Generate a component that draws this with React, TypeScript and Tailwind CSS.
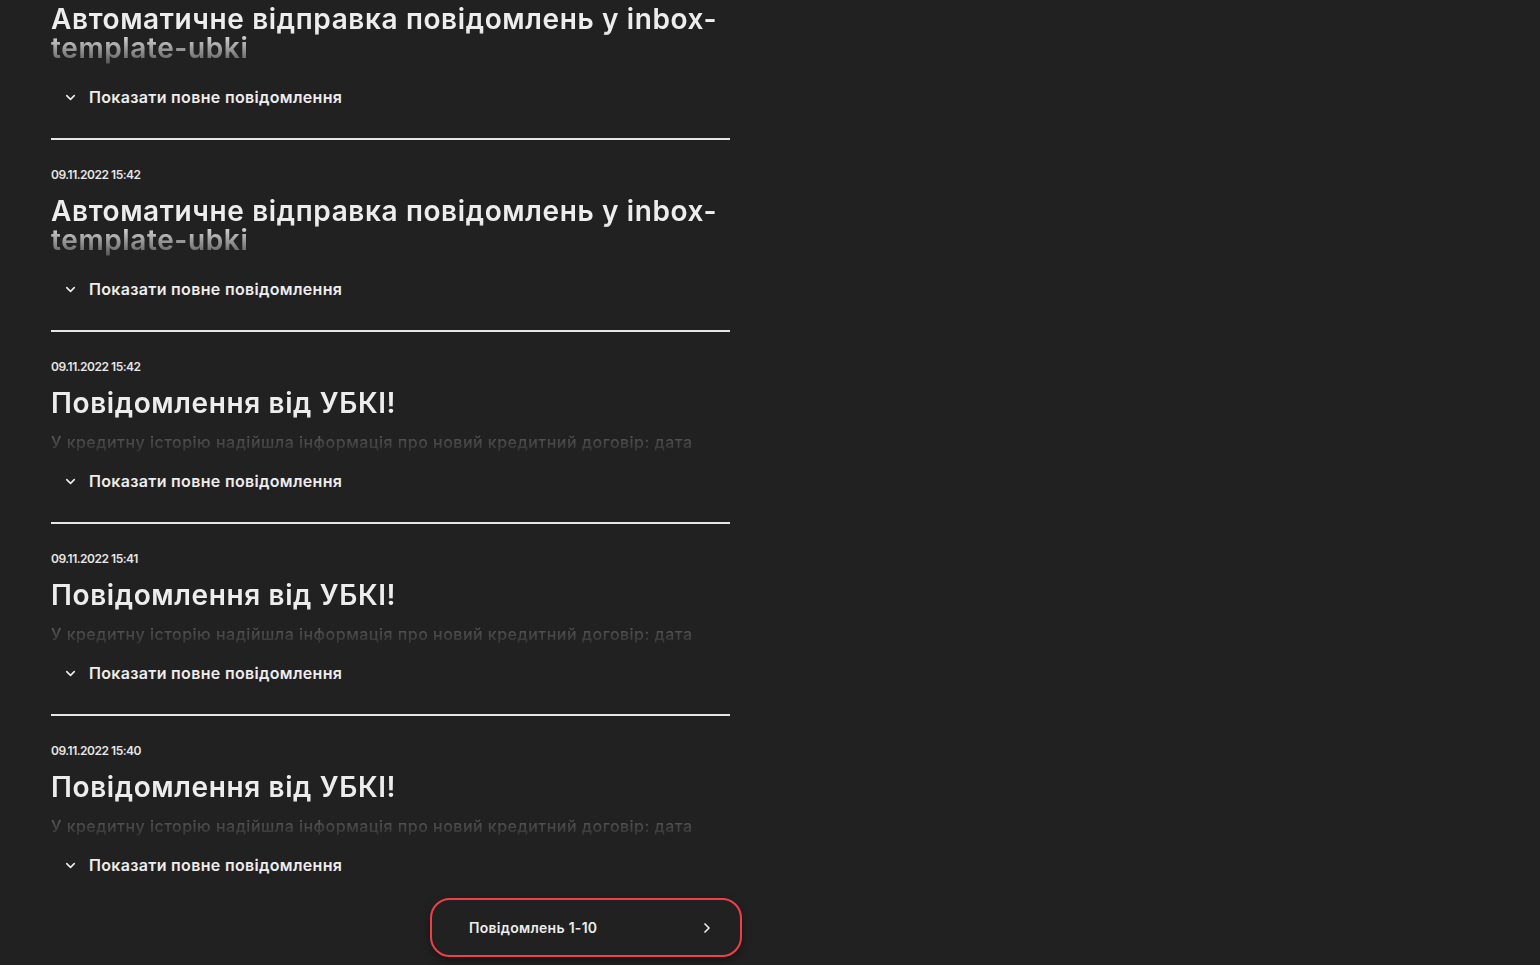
import { ChevronDown, ChevronRight } from "lucide-react";

type Message = {
  date: string;
  title: string;
  body?: string;
};

const messages: Message[] = [
  {
    date: "09.11.2022 15:43",
    title: "Автоматичне відправка повідомлень у inbox-template-ubki",
  },
  {
    date: "09.11.2022 15:42",
    title: "Автоматичне відправка повідомлень у inbox-template-ubki",
  },
  {
    date: "09.11.2022 15:42",
    title: "Повідомлення від УБКІ!",
    body: "У кредитну історію надійшла інформація про новий кредитний договір: дата укладення 09.11.2022, сума 5000 грн.",
  },
  {
    date: "09.11.2022 15:41",
    title: "Повідомлення від УБКІ!",
    body: "У кредитну історію надійшла інформація про новий кредитний договір: дата укладення 09.11.2022, сума 5000 грн.",
  },
  {
    date: "09.11.2022 15:40",
    title: "Повідомлення від УБКІ!",
    body: "У кредитну історію надійшла інформація про новий кредитний договір: дата укладення 09.11.2022, сума 5000 грн.",
  },
];

function MessageItem({ message, last }: { message: Message; last: boolean }) {
  return (
    <article className={last ? "" : "border-b-2 border-[#e6e6e6]"}>
      <div className="pt-[27px]">
        <p className="text-[12px] leading-[16px] font-semibold tracking-[-0.04em] text-[#e6e6e6]">
          {message.date}
        </p>
        <div className="mt-[14px] h-[64px] overflow-hidden [mask-image:linear-gradient(to_bottom,#000_40%,rgba(0,0,0,0.15)_100%)]">
          <h2 className="text-[28px] leading-[29px] font-semibold tracking-[0.022em] text-[#ededed]">
            {message.title}
          </h2>
          {message.body && (
            <p className="mt-[14px] text-[16px] leading-[21px] font-medium tracking-[0.03em] text-[#8a8a8a]">
              {message.body}
            </p>
          )}
        </div>
        <button className="mt-[18px] flex h-[20px] items-center gap-[11px] pl-[12px] text-[16px] font-semibold tracking-[0.02em] text-[#ededed]">
          <ChevronDown size={15} strokeWidth={2.5} />
          Показати повне повідомлення
        </button>
      </div>
      <div className={last ? "h-[23px]" : "h-[31px]"} />
    </article>
  );
}

export default function App() {
  return (
    <main
      className="h-[965px] overflow-hidden bg-[#212121] text-white"
      style={{ fontFamily: "Inter, 'Noto Sans', sans-serif" }}
    >
      <div className="ml-[51px] mt-[-52px] w-[679px]">
        {messages.map((m, i) => (
          <MessageItem key={i} message={m} last={i === messages.length - 1} />
        ))}
        <div className="ml-[379px] flex h-[59px] w-[312px] items-center justify-between rounded-[20px] border-2 border-[#ef4048] pl-[37px] pr-[25px] shadow-[0_4px_10px_rgba(0,0,0,0.35)]">
          <span className="text-[14px] font-semibold tracking-[0.02em] text-[#ededed]">
            Повідомлень 1-10
          </span>
          <ChevronRight size={16} strokeWidth={2.5} className="text-[#ededed]" />
        </div>
      </div>
    </main>
  );
}
